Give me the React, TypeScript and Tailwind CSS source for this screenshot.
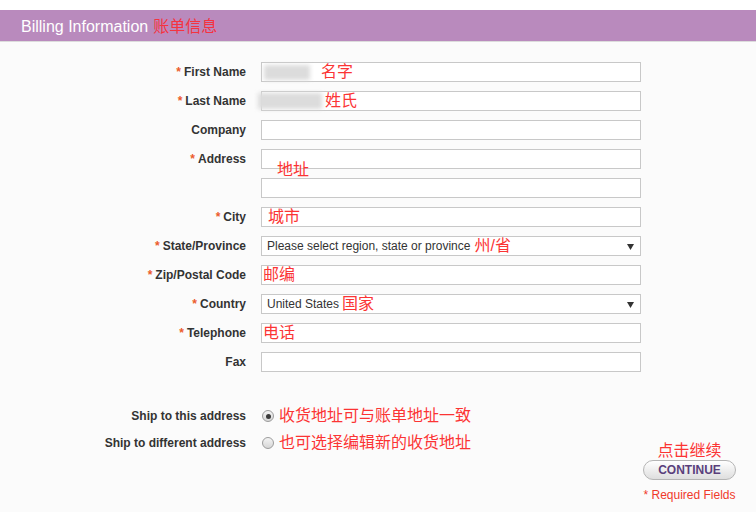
import React from "react";

const FONT = '"Liberation Sans", Arial, "Noto Sans CJK SC", sans-serif';

function Label({ text, req }: { text: string; req?: boolean }) {
  return (
    <div className="h-[20px] flex items-center justify-end text-[12px] font-bold text-[#333]">
      {req && <span className="text-[#ec5b2c] mr-[3px]">*</span>}
      <span>{text}</span>
    </div>
  );
}

function Note({ children, className }: { children: React.ReactNode; className?: string }) {
  return (
    <span className={"absolute text-[16px] leading-[16px] text-[#fb3434] whitespace-nowrap " + (className || "")}>
      {children}
    </span>
  );
}

function Field({ children }: { children?: React.ReactNode }) {
  return <div className="relative h-[20px] border border-[#c8c8c8] bg-white">{children}</div>;
}

function Select({ children }: { children: React.ReactNode }) {
  return (
    <div className="relative h-[20px] border border-[#c8c8c8] bg-white flex items-center pl-[5px] text-[12px] text-[#333]">
      {children}
      <svg className="absolute right-[6px] top-[7px]" width="7" height="6" viewBox="0 0 7 6">
        <path d="M0 0 L7 0 L3.5 6 Z" fill="#333" />
      </svg>
    </div>
  );
}

function Radio({ checked }: { checked?: boolean }) {
  return (
    <div className="w-[12px] h-[12px] rounded-full border border-[#9c9c9c] bg-gradient-to-b from-[#f4f4f4] to-[#d6d6d6] flex items-center justify-center">
      {checked && <div className="w-[5px] h-[5px] rounded-full bg-[#3a3a3a]" />}
    </div>
  );
}

export default function App() {
  return (
    <div className="w-[756px] h-[512px] bg-white overflow-hidden" style={{ fontFamily: FONT }}>
      <div className="h-[10px] bg-white" />
      <div className="h-[32px] bg-[#b98abd] border-b border-[#dcdcdc] flex items-center pl-[21px] pt-[2px]">
        <span className="text-[16px] text-white">Billing Information</span>
        <span className="text-[16px] text-[#f5333f] ml-[5px]">账单信息</span>
      </div>
      <div className="h-[470px] bg-[#fbfbfb] pt-[20px]">
        <div className="grid grid-cols-[246px_380px] gap-x-[15px] gap-y-[9px]">
          <Label text="First Name" req />
          <Field>
            <div className="absolute left-[2px] top-[2px] w-[46px] h-[15px] bg-[#dcdcdc] blur-[2px]" />
            <Note className="left-[59px] top-[1px]">名字</Note>
          </Field>
          <Label text="Last Name" req />
          <Field>
            <div className="absolute left-[-4px] top-[1px] w-[64px] h-[16px] bg-[#dcdcdc] blur-[2px]" />
            <Note className="left-[63px] top-[1px]">姓氏</Note>
          </Field>
          <Label text="Company" />
          <Field />
          <Label text="Address" req />
          <Field>
            <Note className="left-[15px] top-[12px] z-10">地址</Note>
          </Field>
          <div />
          <Field />
          <Label text="City" req />
          <Field>
            <Note className="left-[6px] top-[1px]">城市</Note>
          </Field>
          <Label text="State/Province" req />
          <Select>
            <span>Please select region, state or province</span>
            <span className="ml-[4px] text-[16px] leading-[16px] text-[#fb3434]">州/省</span>
          </Select>
          <Label text="Zip/Postal Code" req />
          <Field>
            <Note className="left-[1px] top-[1px]">邮编</Note>
          </Field>
          <Label text="Country" req />
          <Select>
            <span>United States</span>
            <span className="ml-[3px] text-[16px] leading-[16px] text-[#fb3434]">国家</span>
          </Select>
          <Label text="Telephone" req />
          <Field>
            <Note className="left-[1px] top-[1px]">电话</Note>
          </Field>
          <Label text="Fax" />
          <Field />
        </div>
        <div className="flex mt-[34px]">
          <div className="flex flex-col gap-[7px]">
            <div className="flex items-center h-[20px]">
              <div className="w-[246px] text-right text-[12px] font-bold text-[#333]">Ship to this address</div>
              <div className="ml-[16px]"><Radio checked /></div>
              <span className="ml-[5px] text-[16px] leading-[16px] text-[#fb3434]">收货地址可与账单地址一致</span>
            </div>
            <div className="flex items-center h-[20px]">
              <div className="w-[246px] text-right text-[12px] font-bold text-[#333]">Ship to different address</div>
              <div className="ml-[16px]"><Radio /></div>
              <span className="ml-[5px] text-[16px] leading-[16px] text-[#fb3434]">也可选择编辑新的收货地址</span>
            </div>
          </div>
          <div className="ml-auto mr-[20px] pt-[36px] flex flex-col items-center">
            <span className="text-[16px] leading-[18px] text-[#fb3434]">点击继续</span>
            <button className="w-[93px] h-[20px] rounded-full border border-[#b5b5b5] bg-gradient-to-b from-white to-[#dedede] text-[12px] font-bold text-[#5a3f7c] leading-[18px]">
              CONTINUE
            </button>
            <span className="mt-[6px] text-[12px] text-[#f0392a]">* Required Fields</span>
          </div>
        </div>
      </div>
    </div>
  );
}
